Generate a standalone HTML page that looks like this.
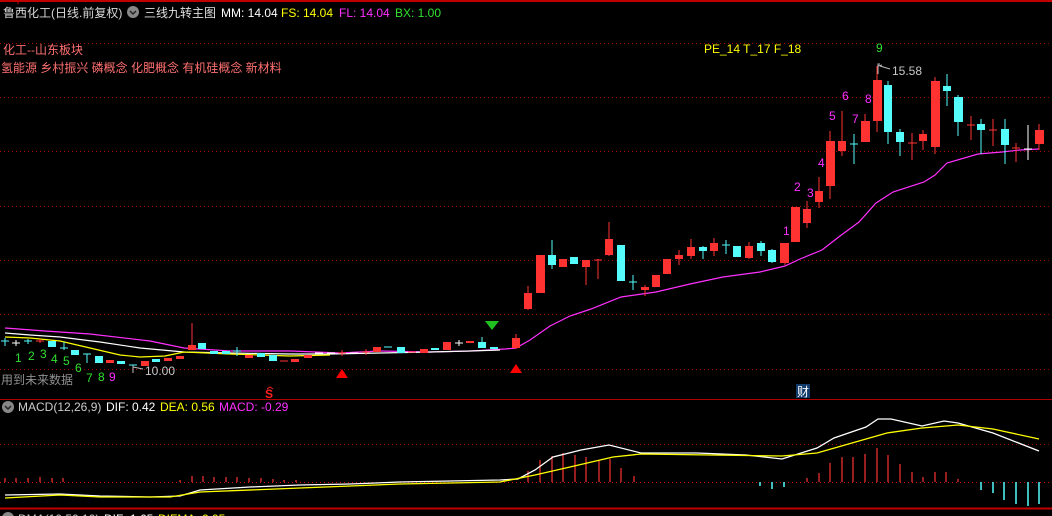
<!DOCTYPE html>
<html><head><meta charset="utf-8"><style>
html,body{margin:0;padding:0;background:#000;width:1052px;height:516px;overflow:hidden}
svg{display:block}
text{font-family:"Liberation Sans","Noto Sans CJK SC",sans-serif;font-size:12px}
</style></head><body>
<svg width="1052" height="516" viewBox="0 0 1052 516" xmlns="http://www.w3.org/2000/svg">
<rect width="1052" height="516" fill="#000"/>
<!-- borders -->
<line x1="0" y1="1" x2="1052" y2="1" stroke="#c00000" stroke-width="2"/>
<line x1="18" y1="0" x2="18" y2="4" stroke="#c00000"/>
<line x1="0" y1="399.5" x2="1052" y2="399.5" stroke="#b00000" stroke-width="1"/>
<line x1="0" y1="508.5" x2="1052" y2="508.5" stroke="#c00000" stroke-width="2"/>
<!-- grids -->
<g stroke="#a00000" stroke-dasharray="1,3" stroke-width="1">
<line x1="0" y1="43.5" x2="1052" y2="43.5"/>
<line x1="0" y1="97.5" x2="1052" y2="97.5"/>
<line x1="0" y1="151.5" x2="1052" y2="151.5"/>
<line x1="0" y1="206.5" x2="1052" y2="206.5"/>
<line x1="0" y1="260.5" x2="1052" y2="260.5"/>
<line x1="0" y1="314.5" x2="1052" y2="314.5"/>
<line x1="0" y1="369.5" x2="1052" y2="369.5"/>
<line x1="0" y1="444.5" x2="1052" y2="444.5"/>
<line x1="0" y1="482.5" x2="1052" y2="482.5" stroke="#d00000"/>
</g>
<!-- header -->
<text x="3" y="17" fill="#d8d8d8" font-size="13">鲁西化工(日线.前复权)</text>
<circle cx="133" cy="12" r="6" fill="#888"/>
<path d="M130 11 l3 3 l3 -3" stroke="#222" stroke-width="1.5" fill="none"/>
<text x="144" y="17" fill="#e0e0e0" font-size="13">三线九转主图</text>
<text x="221" y="17" fill="#fff">MM: 14.04</text>
<text x="281" y="17" fill="#ffff00">FS: 14.04</text>
<text x="339" y="17" fill="#ff30ff">FL: 14.04</text>
<text x="395" y="17" fill="#30e030">BX: 1.00</text>
<text x="3" y="54" fill="#ff7070" font-size="13">化工--山东板块</text>
<text x="1" y="72" fill="#ff7070" font-size="13">氢能源 乡村振兴 磷概念 化肥概念 有机硅概念 新材料</text>
<text x="704" y="53" fill="#ffff00">PE_14 T_17 F_18</text>
<text x="876" y="52" fill="#30e030">9</text>
<path d="M878 74 v-10 h2 M878 66 l4 -1 M880 66 l10 3" stroke="#bbb" fill="none"/>
<text x="892" y="75" fill="#c8c8c8">15.58</text>
<path d="M133 373 v-8 M133 367 l10 2" stroke="#bbb" fill="none"/>
<text x="145" y="375" fill="#c8c8c8">10.00</text>
<text x="1" y="384" fill="#909090" font-size="12">用到未来数据</text>
<!-- left nine numbers -->
<g fill="#30e030" font-size="12">
<text x="15" y="362">1</text><text x="28" y="360">2</text><text x="40" y="358">3</text>
<text x="51" y="363">4</text><text x="63" y="365">5</text><text x="75" y="372">6</text>
<text x="86" y="382">7</text><text x="98" y="381">8</text>
</g>
<text x="109" y="381" fill="#ff30ff">9</text>
<g fill="#ff30ff" font-size="12">
<text x="783" y="235">1</text><text x="794" y="191">2</text><text x="807" y="197">3</text>
<text x="818" y="167">4</text><text x="829" y="120">5</text><text x="842" y="100">6</text>
<text x="852" y="123">7</text><text x="865" y="103">8</text>
</g>
<!-- MAs left -->
<polyline fill="none" stroke="#ff30ff" stroke-width="1.2" points="5,328 45,331 90,334 150,341 184,348 230,351 291,351 340,353 380,351 430,352 470,351 505,349 516,348 530,340 550,326 570,316 591,309 621,297 656,292 690,284 723,277 760,272 785,266 800,259 822,250 840,236 859,222 876,203 893,192 924,182 935,175 947,163 978,154 1002,152 1020,150 1039,149"/>
<polyline fill="none" stroke="#fff" stroke-width="1.2" points="5,333 30,335 60,337 100,342 140,348 184,352 230,353 290,354 330,354 380,353 430,352 470,351 500,350"/>
<polyline fill="none" stroke="#ffff00" stroke-width="1.2" points="5,337 30,338 60,341 90,348 120,355 140,357 165,356 184,352 230,354 290,356 330,355"/>
<!-- candles left -->
<g stroke-width="1">
<g stroke="#54fcfc"><line x1="1" y1="341" x2="9" y2="341"/><line x1="5" y1="338" x2="5" y2="346"/></g>
<g stroke="#fff"><line x1="12" y1="343" x2="20" y2="343"/><line x1="16" y1="340" x2="16" y2="346"/></g>
<g stroke="#54fcfc"><line x1="24" y1="341" x2="32" y2="341"/><line x1="28" y1="339" x2="28" y2="344"/></g>
<g stroke="#ff3232"><line x1="36" y1="341" x2="44" y2="341"/><line x1="40" y1="339" x2="40" y2="343"/></g>
<rect x="48" y="341" width="8" height="6" fill="#54fcfc"/>
<g stroke="#54fcfc"><line x1="60" y1="348" x2="68" y2="348"/><line x1="64" y1="342" x2="64" y2="350"/></g>
<rect x="71" y="350" width="8" height="5" fill="#54fcfc"/>
<g stroke="#54fcfc"><line x1="83" y1="354" x2="91" y2="354"/><line x1="87" y1="354" x2="87" y2="363"/></g>
<rect x="95" y="356" width="8" height="7" fill="#54fcfc"/>
<rect x="106" y="360" width="8" height="3" fill="#ff3232"/>
<rect x="117" y="361" width="8" height="3" fill="#54fcfc"/>
<g stroke="#54fcfc"><line x1="129" y1="365" x2="137" y2="365"/></g>
<rect x="141" y="361" width="8" height="5" fill="#ff3232"/>
<rect x="152" y="359" width="8" height="3" fill="#54fcfc"/>
<rect x="164" y="358" width="8" height="3" fill="#ff3232"/>
<rect x="176" y="356" width="8" height="3" fill="#ff3232"/>
<line x1="192" y1="323" x2="192" y2="349" stroke="#ff3232"/><rect x="188" y="345" width="8" height="5" fill="#ff3232"/>
<rect x="198" y="343" width="8" height="6" fill="#54fcfc"/>
<rect x="210" y="351" width="8" height="3" fill="#54fcfc"/>
<rect x="222" y="351" width="8" height="3" fill="#54fcfc"/>
<g stroke="#54fcfc"><line x1="233" y1="351" x2="241" y2="351"/><line x1="237" y1="347" x2="237" y2="356"/></g>
<rect x="245" y="355" width="8" height="3" fill="#ff3232"/>
<rect x="257" y="353" width="8" height="4" fill="#54fcfc"/>
<rect x="269" y="355" width="8" height="6" fill="#54fcfc"/>
<g stroke="#ff3232"><line x1="280" y1="361" x2="288" y2="361"/></g>
<rect x="291" y="359" width="8" height="3" fill="#ff3232"/>
<rect x="304" y="355" width="8" height="3" fill="#ff3232"/>
<g stroke="#fff"><line x1="315" y1="353" x2="323" y2="353"/></g>
<g stroke="#fff"><line x1="327" y1="353" x2="335" y2="353"/></g>
<g stroke="#ff3232"><line x1="338" y1="353" x2="346" y2="353"/><line x1="342" y1="350" x2="342" y2="356"/></g>
<g stroke="#fff"><line x1="350" y1="353" x2="358" y2="353"/></g>
<g stroke="#ff3232"><line x1="362" y1="352" x2="370" y2="352"/><line x1="366" y1="349" x2="366" y2="355"/></g>
<rect x="373" y="347" width="8" height="5" fill="#ff3232"/>
<g stroke="#54fcfc"><line x1="384" y1="347" x2="392" y2="347"/></g>
<rect x="397" y="347" width="8" height="6" fill="#54fcfc"/>
<g stroke="#ff3232"><line x1="408" y1="352" x2="416" y2="352"/></g>
<rect x="420" y="349" width="8" height="4" fill="#ff3232"/>
<rect x="431" y="348" width="8" height="2" fill="#54fcfc"/>
<rect x="443" y="342" width="8" height="8" fill="#ff3232"/>
<g stroke="#fff"><line x1="455" y1="343" x2="463" y2="343"/><line x1="459" y1="340" x2="459" y2="346"/></g>
<rect x="466" y="341" width="8" height="2" fill="#ff3232"/>
<line x1="482" y1="337" x2="482" y2="348" stroke="#54fcfc"/><rect x="478" y="342" width="8" height="6" fill="#54fcfc"/>
<rect x="490" y="347" width="8" height="2" fill="#54fcfc"/>
<line x1="516" y1="334" x2="516" y2="349" stroke="#ff3232"/><rect x="512" y="338" width="8" height="10" fill="#ff3232"/>
</g>
<!-- candles right -->
<g stroke-width="1">
<line x1="528" y1="286" x2="528" y2="310" stroke="#ff3232"/><rect x="524" y="293" width="8" height="16" fill="#ff3232"/>
<rect x="536" y="255" width="9" height="38" fill="#ff3232"/>
<line x1="552" y1="240" x2="552" y2="269" stroke="#54fcfc"/><rect x="548" y="255" width="8" height="10" fill="#54fcfc"/>
<rect x="559" y="259" width="8" height="8" fill="#ff3232"/>
<rect x="570" y="257" width="8" height="7" fill="#54fcfc"/>
<line x1="586" y1="260" x2="586" y2="285" stroke="#ff3232"/><rect x="582" y="260" width="8" height="7" fill="#ff3232"/>
<line x1="594" y1="260" x2="602" y2="260" stroke="#ff3232"/><line x1="598" y1="259" x2="598" y2="279" stroke="#ff3232"/>
<line x1="609" y1="222" x2="609" y2="256" stroke="#ff3232"/><rect x="605" y="239" width="8" height="16" fill="#ff3232"/>
<rect x="617" y="245" width="8" height="36" fill="#54fcfc"/>
<line x1="629" y1="282" x2="637" y2="282" stroke="#54fcfc"/><line x1="633" y1="275" x2="633" y2="290" stroke="#54fcfc"/>
<rect x="641" y="287" width="8" height="3" fill="#ff3232"/><line x1="645" y1="285" x2="645" y2="296" stroke="#ff3232"/>
<rect x="652" y="275" width="8" height="12" fill="#ff3232"/>
<rect x="663" y="259" width="8" height="15" fill="#ff3232"/>
<rect x="675" y="255" width="8" height="4" fill="#ff3232"/><line x1="679" y1="250" x2="679" y2="265" stroke="#ff3232"/>
<line x1="691" y1="239" x2="691" y2="259" stroke="#ff3232"/><rect x="687" y="247" width="8" height="9" fill="#ff3232"/>
<rect x="699" y="247" width="8" height="4" fill="#54fcfc"/><line x1="703" y1="246" x2="703" y2="259" stroke="#54fcfc"/>
<line x1="714" y1="238" x2="714" y2="256" stroke="#ff3232"/><rect x="710" y="243" width="8" height="8" fill="#ff3232"/>
<line x1="722" y1="245" x2="730" y2="245" stroke="#54fcfc"/><line x1="726" y1="240" x2="726" y2="254" stroke="#54fcfc"/>
<rect x="733" y="246" width="8" height="11" fill="#54fcfc"/>
<line x1="749" y1="242" x2="749" y2="259" stroke="#ff3232"/><rect x="745" y="246" width="8" height="12" fill="#ff3232"/>
<line x1="761" y1="241" x2="761" y2="256" stroke="#54fcfc"/><rect x="757" y="243" width="8" height="8" fill="#54fcfc"/>
<line x1="772" y1="249" x2="772" y2="263" stroke="#54fcfc"/><rect x="768" y="250" width="8" height="12" fill="#54fcfc"/>
<line x1="785" y1="243" x2="785" y2="265" stroke="#ff3232"/><rect x="780" y="243" width="9" height="20" fill="#ff3232"/>
<rect x="791" y="207" width="9" height="35" fill="#ff3232"/>
<line x1="807" y1="201" x2="807" y2="228" stroke="#ff3232"/><rect x="803" y="209" width="8" height="14" fill="#ff3232"/>
<line x1="819" y1="177" x2="819" y2="208" stroke="#ff3232"/><rect x="815" y="191" width="8" height="11" fill="#ff3232"/>
<line x1="830" y1="131" x2="830" y2="199" stroke="#ff3232"/><rect x="826" y="141" width="9" height="45" fill="#ff3232"/>
<line x1="842" y1="111" x2="842" y2="156" stroke="#ff3232"/><rect x="838" y="141" width="8" height="10" fill="#ff3232"/>
<line x1="850" y1="144" x2="858" y2="144" stroke="#54fcfc"/><line x1="854" y1="134" x2="854" y2="164" stroke="#54fcfc"/>
<line x1="865" y1="114" x2="865" y2="142" stroke="#ff3232"/><rect x="861" y="121" width="9" height="21" fill="#ff3232"/>
<line x1="877" y1="66" x2="877" y2="132" stroke="#ff3232"/><rect x="873" y="80" width="9" height="41" fill="#ff3232"/>
<line x1="888" y1="81" x2="888" y2="144" stroke="#54fcfc"/><rect x="884" y="85" width="8" height="47" fill="#54fcfc"/>
<line x1="900" y1="129" x2="900" y2="156" stroke="#54fcfc"/><rect x="896" y="132" width="8" height="10" fill="#54fcfc"/>
<line x1="908" y1="143" x2="917" y2="143" stroke="#ff3232"/><line x1="912" y1="133" x2="912" y2="160" stroke="#ff3232"/>
<line x1="923" y1="130" x2="923" y2="150" stroke="#ff3232"/><rect x="919" y="134" width="8" height="7" fill="#ff3232"/>
<line x1="935" y1="77" x2="935" y2="154" stroke="#ff3232"/><rect x="931" y="81" width="9" height="66" fill="#ff3232"/>
<line x1="947" y1="74" x2="947" y2="106" stroke="#54fcfc"/><rect x="943" y="86" width="8" height="5" fill="#54fcfc"/>
<line x1="958" y1="95" x2="958" y2="136" stroke="#54fcfc"/><rect x="954" y="97" width="9" height="25" fill="#54fcfc"/>
<line x1="967" y1="125" x2="975" y2="125" stroke="#ff3232"/><line x1="971" y1="116" x2="971" y2="140" stroke="#ff3232"/>
<line x1="981" y1="119" x2="981" y2="154" stroke="#54fcfc"/><rect x="977" y="124" width="8" height="6" fill="#54fcfc"/>
<line x1="989" y1="130" x2="997" y2="130" stroke="#ff3232"/><line x1="993" y1="119" x2="993" y2="146" stroke="#ff3232"/>
<line x1="1005" y1="119" x2="1005" y2="164" stroke="#54fcfc"/><rect x="1001" y="129" width="8" height="16" fill="#54fcfc"/>
<line x1="1012" y1="148" x2="1020" y2="148" stroke="#ff3232"/><line x1="1016" y1="143" x2="1016" y2="162" stroke="#ff3232"/>
<line x1="1024" y1="149" x2="1032" y2="149" stroke="#fff"/><line x1="1028" y1="125" x2="1028" y2="160" stroke="#fff"/>
<line x1="1039" y1="124" x2="1039" y2="150" stroke="#ff3232"/><rect x="1035" y="130" width="9" height="14" fill="#ff3232"/>
</g>
<!-- markers -->
<polygon points="485,321 499,321 492,330" fill="#20c020"/>
<polygon points="336,378 348,378 342,369" fill="#ff0000"/>
<polygon points="510,373 522,373 516,364" fill="#ff0000"/>
<text x="265" y="398" fill="#ff2020" font-size="12" font-weight="bold">S</text>
<path d="M267 389 l3 -2 l3 2" stroke="#ff2020" fill="none"/>
<rect x="796" y="384" width="14" height="14" fill="#123a6a"/>
<text x="797" y="396" fill="#fff" font-size="12">财</text>
<!-- MACD header -->
<circle cx="8" cy="407" r="6" fill="#888"/>
<path d="M5 406 l3 3 l3 -3" stroke="#222" stroke-width="1.5" fill="none"/>
<text x="18" y="411" fill="#ccc">MACD(12,26,9)</text>
<text x="106" y="411" fill="#fff">DIF: 0.42</text>
<text x="160" y="411" fill="#ffff00">DEA: 0.56</text>
<text x="219" y="411" fill="#ff30ff">MACD: -0.29</text>
<!-- histogram -->
<g stroke="#ff3232" stroke-width="1.2">
<line x1="5" y1="478" x2="5" y2="482"/><line x1="16" y1="478" x2="16" y2="482"/><line x1="28" y1="478" x2="28" y2="482"/><line x1="40" y1="477" x2="40" y2="482"/><line x1="52" y1="478" x2="52" y2="482"/><line x1="63" y1="478" x2="63" y2="482"/>
<line x1="180" y1="480" x2="180" y2="482"/><line x1="192" y1="476" x2="192" y2="482"/><line x1="203" y1="476" x2="203" y2="482"/><line x1="214" y1="477" x2="214" y2="482"/><line x1="226" y1="477" x2="226" y2="482"/><line x1="237" y1="477" x2="237" y2="482"/><line x1="249" y1="478" x2="249" y2="482"/><line x1="261" y1="478" x2="261" y2="482"/><line x1="273" y1="479" x2="273" y2="482"/><line x1="284" y1="480" x2="284" y2="482"/><line x1="296" y1="480" x2="296" y2="482"/>
<line x1="528" y1="471" x2="528" y2="482"/><line x1="540" y1="460" x2="540" y2="482"/><line x1="552" y1="456" x2="552" y2="482"/><line x1="563" y1="453" x2="563" y2="482"/><line x1="575" y1="455" x2="575" y2="482"/><line x1="586" y1="457" x2="586" y2="482"/><line x1="599" y1="460" x2="599" y2="482"/><line x1="610" y1="459" x2="610" y2="482"/><line x1="621" y1="468" x2="621" y2="482"/><line x1="634" y1="476" x2="634" y2="482"/>
<line x1="807" y1="478" x2="807" y2="482"/><line x1="819" y1="473" x2="819" y2="482"/><line x1="830" y1="463" x2="830" y2="482"/><line x1="842" y1="457" x2="842" y2="482"/><line x1="853" y1="457" x2="853" y2="482"/><line x1="865" y1="454" x2="865" y2="482"/><line x1="877" y1="448" x2="877" y2="482"/><line x1="888" y1="455" x2="888" y2="482"/><line x1="900" y1="464" x2="900" y2="482"/><line x1="912" y1="472" x2="912" y2="482"/><line x1="923" y1="477" x2="923" y2="482"/><line x1="935" y1="472" x2="935" y2="482"/><line x1="946" y1="472" x2="946" y2="482"/><line x1="958" y1="479" x2="958" y2="482"/>
</g>
<g stroke="#54fcfc" stroke-width="1.5">
<line x1="760" y1="482" x2="760" y2="486"/><line x1="772" y1="482" x2="772" y2="489"/><line x1="784" y1="482" x2="784" y2="487"/>
<line x1="981" y1="482" x2="981" y2="490"/><line x1="993" y1="482" x2="993" y2="493"/><line x1="1004" y1="482" x2="1004" y2="500"/><line x1="1016" y1="482" x2="1016" y2="504"/><line x1="1028" y1="482" x2="1028" y2="506"/><line x1="1039" y1="482" x2="1039" y2="504"/>
</g>
<polyline fill="none" stroke="#fff" stroke-width="1.3" points="5,495 60,494 100,496 150,497 180,496 200,490 250,487 300,485 350,484 400,482 450,481 500,480 518,479 535,470 553,457 581,450 609,445 641,453 697,453 746,455 782,459 817,448 834,438 866,427 878,419 891,419 922,426 944,421 958,423 993,433 1039,451"/>
<polyline fill="none" stroke="#ffff00" stroke-width="1.3" points="5,498 60,495 100,497 170,497 200,492 300,488 400,484 500,482 535,475 570,467 613,457 641,454 782,456 817,453 852,443 887,433 922,428 958,425 993,429 1039,439"/>
<!-- DMA header (cut) -->
<circle cx="8" cy="518" r="6" fill="#888"/>
<text x="18" y="523" fill="#ccc">DMA(10,50,10)</text>
<text x="104" y="523" fill="#fff">DIF: 1.65</text>
<text x="158" y="523" fill="#ffff00">DIFMA: 2.95</text>
</svg>
</body></html>
